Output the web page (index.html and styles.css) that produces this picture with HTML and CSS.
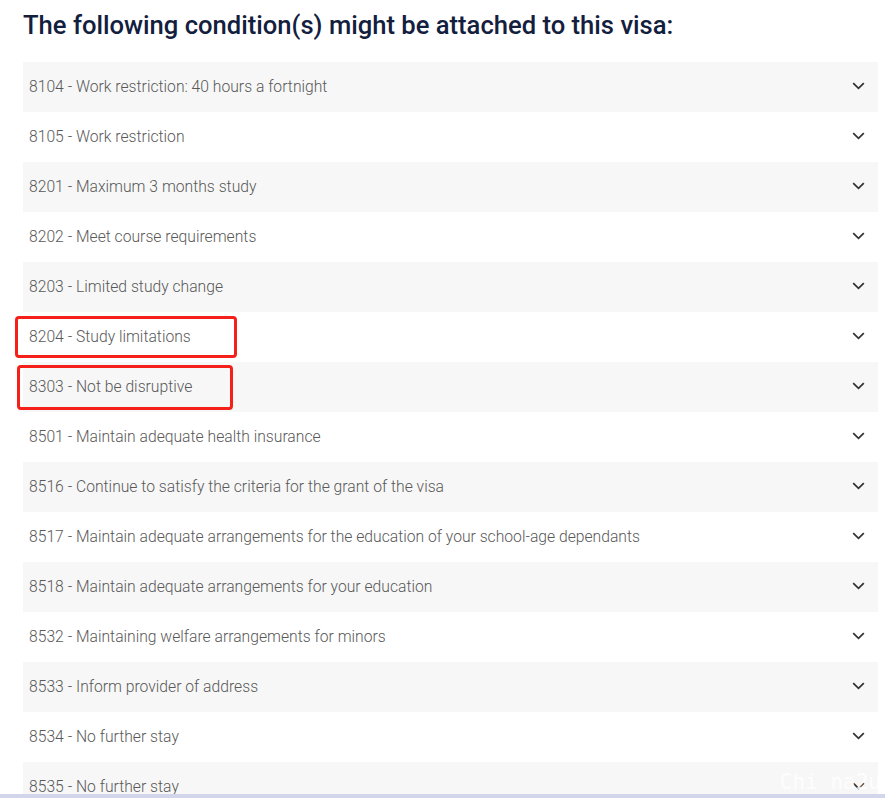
FILE: index.html
```html
<!DOCTYPE html>
<html lang="en">
	<head>
		<meta charset="UTF-8" />
		<meta name="viewport" content="width=device-width, initial-scale=1.0" />
		<title>Visa conditions</title>
		<link rel="stylesheet" href="styles.css">
	</head>
	<body>
		<div class="page">
			<h2 class="title">The following condition(s) might be attached to this visa:</h2>
			<div class="conditions" id="conditions"></div>
			<span class="watermark">Chi na2u</span>
		</div>
		<div class="bottom-bar"></div>

		<script>
			const conditions = [
				["8104", "Work restriction: 40 hours a fortnight"],
				["8105", "Work restriction"],
				["8201", "Maximum 3 months study"],
				["8202", "Meet course requirements"],
				["8203", "Limited study change"],
				["8204", "Study limitations", "marked"],
				["8303", "Not be disruptive", "marked second"],
				["8501", "Maintain adequate health insurance"],
				["8516", "Continue to satisfy the criteria for the grant of the visa"],
				["8517", "Maintain adequate arrangements for the education of your school-age dependants"],
				["8518", "Maintain adequate arrangements for your education"],
				["8532", "Maintaining welfare arrangements for minors"],
				["8533", "Inform provider of address"],
				["8534", "No further stay"],
				["8535", "No further stay"]
			];

			const chevron =
				'<svg class="chevron" width="13" height="8" viewBox="0 0 13 8"><path d="M1.2 1.2 L6.5 6.3 L11.8 1.2" fill="none" stroke="#333" stroke-width="1.8"/></svg>';

			const list = document.getElementById("conditions");
			conditions.forEach(([code, text, mark]) => {
				const row = document.createElement("div");
				row.classList.add("condition");
				row.innerHTML = `
					<span class="label ${mark || ""}">${code} - ${text}</span>
					${chevron}`;
				list.appendChild(row);
			});
		</script>
	</body>
</html>
```

FILE: styles.css
```css
html,
body {
	margin: 0;
	height: 798px;
	overflow: hidden;
	background: #fff;
}
body {
	display: flex;
	flex-direction: column;
	font-family: Roboto, "Liberation Sans", sans-serif;
}
.page {
	flex: 1;
	overflow: hidden;
	padding: 0 7px 0 23px;
	position: relative;
}
.title {
	margin: 0;
	padding-top: 8px;
	height: 62px;
	box-sizing: border-box;
	font-size: 25.6px;
	font-weight: 500;
	color: #13203d;
	line-height: 34px;
}
.condition {
	height: 50px;
	display: flex;
	align-items: center;
	justify-content: space-between;
	padding: 0 13px 0 6px;
}
.condition:nth-child(odd) {
	background: #f7f7f7;
}
.label {
	font-size: 15.7px;
	font-weight: 300;
	color: #595959;
	position: relative;
	top: -1px;
}
.label.marked::after {
	content: "";
	position: absolute;
	left: -14px;
	right: -46px;
	top: -11px;
	bottom: -12px;
	border: 3.5px solid #f5201a;
	border-radius: 4px;
}
.label.second::after {
	left: -12px;
	right: -41px;
	top: -12px;
	bottom: -14px;
}
.chevron {
	display: block;
	margin-top: -3px;
}
.watermark {
	position: absolute;
	right: 4px;
	bottom: 1px;
	font-family: "DejaVu Sans Mono", monospace;
	font-size: 21px;
	line-height: 22px;
	color: rgba(255, 255, 255, 0.85);
}
.bottom-bar {
	height: 4px;
	background: #d3d6ea;
}
```
